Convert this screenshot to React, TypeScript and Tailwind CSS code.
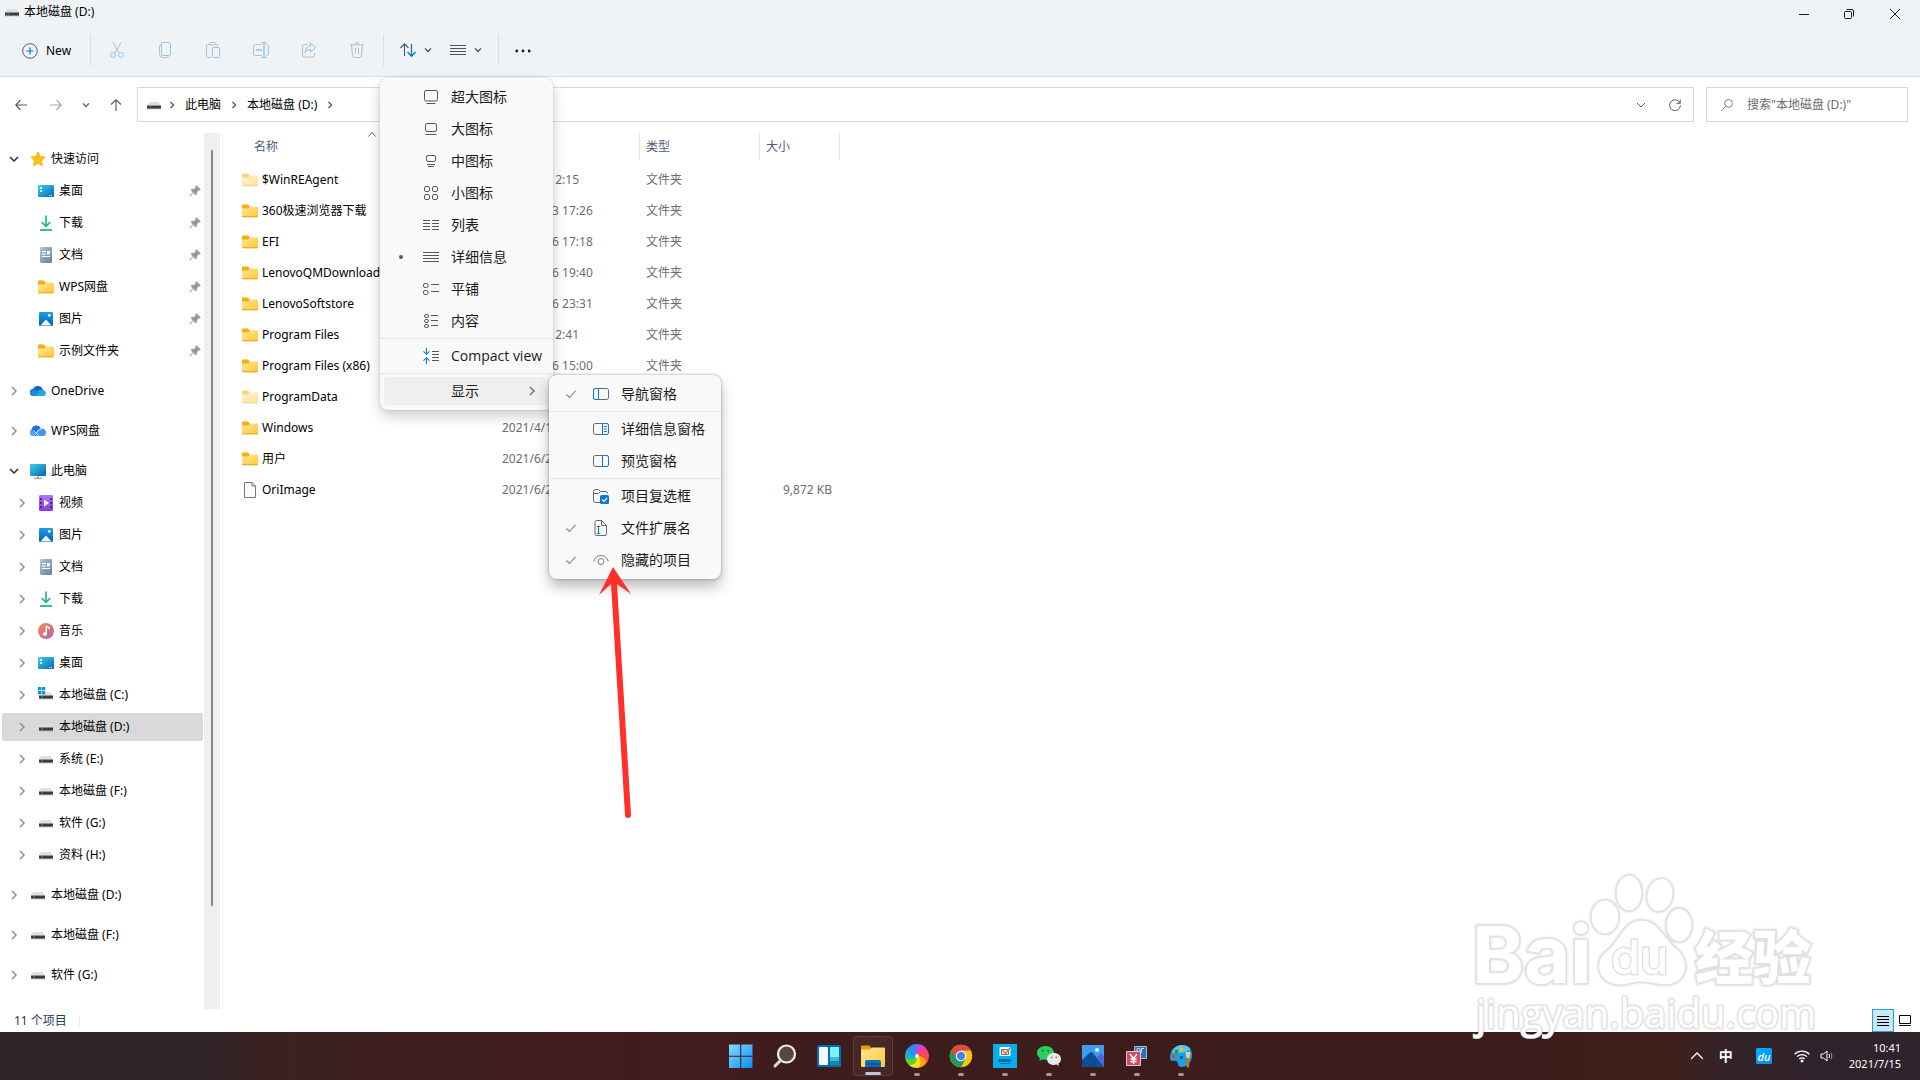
import type { ReactNode } from "react";
import clsx from "clsx";

type IconProps = { className?: string };

const Svg = ({
  size = 16,
  box = 16,
  className,
  children,
}: IconProps & { size?: number; box?: number; children: ReactNode }) => (
  <svg
    width={size}
    height={size}
    viewBox={`0 0 ${box} ${box}`}
    fill="none"
    aria-hidden="true"
    className={clsx("shrink-0", className)}
  >
    {children}
  </svg>
);

/* shared gradients for the coloured icons */
const Gradients = () => (
  <svg width="0" height="0" className="absolute" aria-hidden="true">
    <defs>
      <linearGradient id="folder" x1="0" y1="0" x2="1" y2="1">
        <stop offset="0" stopColor="#ffe69a" />
        <stop offset="1" stopColor="#ffc933" />
      </linearGradient>
      <linearGradient id="screen" x1="0" y1="0" x2="1" y2="1">
        <stop offset="0" stopColor="#37d4e4" />
        <stop offset="1" stopColor="#0b62b8" />
      </linearGradient>
      <linearGradient id="photo" x1="0" y1="0" x2="0" y2="1">
        <stop offset="0" stopColor="#1e9de3" />
        <stop offset="1" stopColor="#0862b2" />
      </linearGradient>
      <linearGradient id="doc" x1="0" y1="0" x2="1" y2="1">
        <stop offset="0" stopColor="#b3c5db" />
        <stop offset="1" stopColor="#64809f" />
      </linearGradient>
      <linearGradient id="video" x1="0" y1="0" x2="0" y2="1">
        <stop offset="0" stopColor="#b774f5" />
        <stop offset="1" stopColor="#843bdc" />
      </linearGradient>
      <linearGradient id="music" x1="0" y1="0" x2="1" y2="1">
        <stop offset="0" stopColor="#f39150" />
        <stop offset="1" stopColor="#b061ac" />
      </linearGradient>
      <linearGradient id="win" x1="0" y1="0" x2="1" y2="1">
        <stop offset="0" stopColor="#84dcff" />
        <stop offset="1" stopColor="#0a8cf5" />
      </linearGradient>
      <linearGradient id="du" x1="0" y1="0" x2="1" y2="1">
        <stop offset="0" stopColor="#00b4ff" />
        <stop offset="1" stopColor="#0a86f5" />
      </linearGradient>
    </defs>
  </svg>
);

const Chevron = ({ className }: IconProps) => (
  <Svg size={8} box={8} className={className}>
    <path d="M1 2.4 4 5.5 7 2.4" stroke="currentColor" strokeWidth="1.3" />
  </Svg>
);

const ChevronRight = ({ className }: IconProps) => (
  <Svg size={10} box={10} className={className}>
    <path d="M3 1 7 5 3 9" stroke="currentColor" strokeWidth="1.4" />
  </Svg>
);

const CrumbArrow = ({ className }: IconProps) => (
  <Svg size={10} box={10} className={className}>
    <path d="M3.5 2 6.5 5 3.5 8" stroke="currentColor" strokeWidth="1.4" />
  </Svg>
);

const DriveIcon = () => (
  <Svg>
    <path d="M3.4 5h9.2L15 8.5H1z" fill="#dcdee0" />
    <path d="M1 8.5h14v3.4H1z" fill="#3c3c3c" />
    <path d="M1 11.3h14v.9H1z" fill="#8b8d8e" />
    <path d="M3.6 9.4h1.3v1.2H3.6z" fill="#19e43a" />
  </Svg>
);

const SystemDriveIcon = () => (
  <Svg>
    <path d="M6 5.5h6.6L15 8.5H1z" fill="#dcdee0" />
    <path d="M1 8.5h14v3.4H1z" fill="#3c3c3c" />
    <path d="M1 11.3h14v.9H1z" fill="#8b8d8e" />
    <path d="M3.6 9.4h1.3v1.2H3.6z" fill="#19e43a" />
    <path
      d="M0 0h3.3v3.3H0zM3.9 0h3.3v3.3H3.9zM0 3.9h3.3v3.3H0zM3.9 3.9h3.3v3.3H3.9z"
      fill="#0f8fe0"
    />
  </Svg>
);

const FolderIcon = ({ className }: IconProps) => (
  <Svg className={className}>
    <path d="M0 2.6q0-1 1-1h5l2 2.2V7H0z" fill="#f5ae09" />
    <path d="M0 5.4h6.2L8 3.6h7q1 0 1 1v8.6q0 1-1 1H1q-1 0-1-1z" fill="url(#folder)" />
    <path d="M0 13.2h16q0 1-1 1H1q-1 0-1-1z" fill="#e2a71b" />
  </Svg>
);

const FileIcon = () => (
  <Svg>
    <path d="M2.5.5h7.6l3.4 3.4v11.6h-11z" fill="#fafafa" stroke="#777" />
    <path d="M10 .5V4h3.5" stroke="#777" />
  </Svg>
);

const StarIcon = () => (
  <Svg>
    <path
      d="m8 1 2.2 4.5 4.9.7-3.6 3.5.9 4.9L8 12.3l-4.4 2.3.9-4.9L.9 6.2l4.9-.7z"
      fill="#fdc116"
      stroke="#f5b50e"
    />
  </Svg>
);

const DesktopIcon = () => (
  <Svg>
    <rect y="2" width="16" height="12" rx="1" fill="url(#screen)" />
    <path d="M2 4h2v2H2zM2 7h2v2H2z" fill="#d8fbff" />
    <path d="M11 12.5h1.2M12.8 12.5H14" stroke="#c7ecff" />
  </Svg>
);

const DownloadIcon = () => (
  <Svg>
    <path d="M8 .5v10.5M3.6 7 8 11.4 12.4 7" stroke="#23b78a" strokeWidth="1.7" />
    <path d="M2 15h12" stroke="#1aab97" strokeWidth="1.7" />
  </Svg>
);

const DocumentIcon = () => (
  <Svg>
    <rect x="2" width="12" height="16" rx="1.2" fill="url(#doc)" />
    <path d="M4 4.5h4M4 7h4M4 9.5h8" stroke="#fff" />
    <path d="M9 4h3v3.5H9z" fill="#fff" />
  </Svg>
);

const PictureIcon = () => (
  <Svg>
    <rect x="1" y="1" width="14" height="14" rx="1.2" fill="url(#photo)" />
    <path d="m2.4 14.6 5.6-6 5.6 6z" fill="#eef8ff" />
    <circle cx="11.3" cy="4.4" r="1.4" fill="#e6f6ff" />
  </Svg>
);

const VideoIcon = () => (
  <Svg>
    <rect x="1" width="14" height="16" rx="1.2" fill="url(#video)" />
    <path
      d="M2 3h1.8v2H2zM2 7h1.8v2H2zM2 11h1.8v2H2zM12.2 3H14v2h-1.8zM12.2 7H14v2h-1.8zM12.2 11H14v2h-1.8z"
      fill="#4c1c8a"
    />
    <path d="m6 4.4 5.2 3.6L6 11.6z" fill="#fff" />
  </Svg>
);

const MusicIcon = () => (
  <Svg>
    <circle cx="8" cy="8" r="8" fill="url(#music)" />
    <ellipse cx="6.8" cy="11" rx="2.1" ry="1.8" fill="#fff" />
    <path d="M8.3 11V3.4l2.8 1v1.9" stroke="#fff" strokeWidth="1.4" />
  </Svg>
);

const PcIcon = () => (
  <Svg>
    <rect y="1" width="16" height="12" rx=".8" fill="url(#screen)" />
    <path d="M7 13h2v2H7z" fill="#b6bec5" />
    <path d="M4 15.3h8" stroke="#8d99a3" strokeWidth="1.2" />
  </Svg>
);

const OneDriveIcon = () => (
  <Svg>
    <path d="M3.5 13A3.5 3.5 0 0 1 3 6a5.3 5.3 0 0 1 10 1.2A3 3 0 0 1 13 13z" fill="#0f6cc5" />
    <path d="M5 13 2 11.8 9.5 7l3.5.2A2.9 2.9 0 0 1 13 13z" fill="#28a8ea" />
    <path d="M3.5 13A3.4 3.4 0 0 1 .2 8.6L3 6.4l6.6 3L5 13z" fill="#168fdd" />
  </Svg>
);

const WpsCloudIcon = () => (
  <Svg>
    <path d="M3.5 13A3.5 3.5 0 0 1 1.6 6.5 5 5 0 0 1 10.5 4.5L9 13z" fill="#1f6ff0" />
    <path d="M8 13 6 9.5Q7.5 6 11.5 5.5A4 4 0 0 1 16 9.4 3.6 3.6 0 0 1 12.5 13z" fill="#3f93fa" />
    <path d="M3.5 13A3.5 3.5 0 0 1 1.5 6.7L8 13z" fill="#5aa6fb" />
    <path d="m3.4 7.4 5.4 5.4M6.8 9.8Q8 6.2 11.5 5.8" stroke="#fff" strokeWidth=".9" />
  </Svg>
);

const PinIcon = () => (
  <Svg size={12} box={12}>
    <path
      d="M7.4.6 11.4 4.6 10.2 5.2 9.7 5.1 7.8 7 7.7 9.2 6.8 10 4.3 7.6 1 11.2.7 10.9 4.2 7.5 1.9 5.2 2.8 4.3 5 4.2 6.9 2.3 6.8 1.7z"
      fill="#919ca5"
      stroke="#919ca5"
      strokeWidth=".7"
    />
  </Svg>
);

type TreeNode = {
  label: string;
  icon: ReactNode;
  level?: 0 | 1;
  open?: boolean;
  pinned?: boolean;
  selected?: boolean;
};

const tree: TreeNode[] = [
  { label: "快速访问", icon: <StarIcon />, open: true },
  { label: "桌面", icon: <DesktopIcon />, level: 1, pinned: true },
  { label: "下载", icon: <DownloadIcon />, level: 1, pinned: true },
  { label: "文档", icon: <DocumentIcon />, level: 1, pinned: true },
  { label: "WPS网盘", icon: <FolderIcon />, level: 1, pinned: true },
  { label: "图片", icon: <PictureIcon />, level: 1, pinned: true },
  { label: "示例文件夹", icon: <FolderIcon />, level: 1, pinned: true },
  { label: "OneDrive", icon: <OneDriveIcon /> },
  { label: "WPS网盘", icon: <WpsCloudIcon /> },
  { label: "此电脑", icon: <PcIcon />, open: true },
  { label: "视频", icon: <VideoIcon />, level: 1 },
  { label: "图片", icon: <PictureIcon />, level: 1 },
  { label: "文档", icon: <DocumentIcon />, level: 1 },
  { label: "下载", icon: <DownloadIcon />, level: 1 },
  { label: "音乐", icon: <MusicIcon />, level: 1 },
  { label: "桌面", icon: <DesktopIcon />, level: 1 },
  { label: "本地磁盘 (C:)", icon: <SystemDriveIcon />, level: 1 },
  { label: "本地磁盘 (D:)", icon: <DriveIcon />, level: 1, selected: true },
  { label: "系统 (E:)", icon: <DriveIcon />, level: 1 },
  { label: "本地磁盘 (F:)", icon: <DriveIcon />, level: 1 },
  { label: "软件 (G:)", icon: <DriveIcon />, level: 1 },
  { label: "资料 (H:)", icon: <DriveIcon />, level: 1 },
  { label: "本地磁盘 (D:)", icon: <DriveIcon /> },
  { label: "本地磁盘 (F:)", icon: <DriveIcon /> },
  { label: "软件 (G:)", icon: <DriveIcon /> },
];

const files = [
  { name: "$WinREAgent", date: "2021/7/5 2:15", hidden: true },
  { name: "360极速浏览器下载", date: "2021/6/23 17:26" },
  { name: "EFI", date: "2021/6/26 17:18" },
  { name: "LenovoQMDownload", date: "2021/6/26 19:40" },
  { name: "LenovoSoftstore", date: "2021/6/26 23:31" },
  { name: "Program Files", date: "2021/7/5 2:41" },
  { name: "Program Files (x86)", date: "2021/6/26 15:00" },
  { name: "ProgramData", hidden: true },
  { name: "Windows", date: "2021/4/1" },
  { name: "用户", date: "2021/6/2" },
  { name: "OriImage", date: "2021/6/2", size: "9,872 KB" },
];

const Sep = ({ className }: IconProps) => (
  <div className={clsx("h-8 w-px bg-[#dcdfe2]", className)} />
);

const ToolButton = ({ label, children }: { label: string; children: ReactNode }) => (
  <button aria-label={label} className="flex h-9 w-12 items-center justify-center">
    {children}
  </button>
);

const TitleBar = () => (
  <div className="flex h-6 items-center">
    <div className="flex items-center gap-1 pl-1">
      <DriveIcon />
      <h1 className="text-xs">本地磁盘 (D:)</h1>
    </div>
    <div className="ml-auto flex h-7 self-start pr-px text-[#1b1b1b]">
      <button aria-label="最小化" className="flex w-[45px] items-center justify-center">
        <Svg size={10} box={10}>
          <path d="M0 5.5h10" stroke="currentColor" />
        </Svg>
      </button>
      <button aria-label="还原" className="flex w-[45px] items-center justify-center">
        <Svg size={10} box={10}>
          <rect x=".5" y="2.5" width="7" height="7" rx="1" stroke="currentColor" />
          <path d="M2.5.5H8q1.5 0 1.5 1.5v5.5" stroke="currentColor" />
        </Svg>
      </button>
      <button aria-label="关闭" className="flex w-12 items-center justify-center">
        <Svg size={10} box={10}>
          <path d="m0 0 10 10M10 0 0 10" stroke="currentColor" />
        </Svg>
      </button>
    </div>
  </div>
);

const Toolbar = () => (
  <div className="flex h-[52px] items-center">
    <button className="ml-[22px] flex w-[68px] items-center gap-2 pt-px text-left text-xs">
      <Svg>
        <circle cx="8" cy="8" r="7.3" stroke="#5a5f63" />
        <path d="M8 4.5v7M4.5 8h7" stroke="#0a74cf" strokeWidth="1.2" />
      </Svg>
      New
    </button>
    <Sep className="mr-0.5" />
    <ToolButton label="剪切">
      <Svg>
        <path d="M4 .5 10 11M12 .5 6 11" stroke="#b9bdc0" />
        <circle cx="4" cy="13" r="2.4" stroke="#8fc4ec" />
        <circle cx="12" cy="13" r="2.4" stroke="#8fc4ec" />
      </Svg>
    </ToolButton>
    <ToolButton label="复制">
      <Svg>
        <path d="M4.5 2.5Q2.5 2.8 2.5 5v7q0 3.5 3.5 3.5h3.5q1.5 0 2-1.5" stroke="#b9bdc0" />
        <rect x="4.5" y=".5" width="9" height="13" rx="1.8" stroke="#8fc4ec" />
      </Svg>
    </ToolButton>
    <ToolButton label="粘贴">
      <Svg>
        <path
          d="M5 2.5H2.8q-1.3 0-1.3 1.3v10.4q0 1.3 1.3 1.3H6M10 2.5h1.2q1.3 0 1.3 1.3V5"
          stroke="#b9bdc0"
        />
        <rect x="4.5" y=".5" width="6" height="2.5" rx="1.2" stroke="#b9bdc0" />
        <rect x="7.5" y="5.5" width="7" height="10" rx="1.2" stroke="#8fc4ec" />
      </Svg>
    </ToolButton>
    <ToolButton label="重命名">
      <Svg>
        <path d="M9 2.5H2.5q-2 0-2 2v7q0 2 2 2H9M13 2.5h.5q2 0 2 2v7q0 2-2 2H13" stroke="#b9bdc0" />
        <path d="M11 0v16M8.5.5h5M8.5 15.5h5M3 8h6" stroke="#8fc4ec" strokeWidth="1.4" />
      </Svg>
    </ToolButton>
    <ToolButton label="共享">
      <Svg>
        <path d="M6.5 2.5h-3q-2 0-2 2V13q0 2 2 2h8q2 0 2-2v-2" stroke="#b9bdc0" />
        <path
          d="M9.5 1.3 14.7 5.6 9.5 10V7.3Q6 7.3 4.2 10.3 4.6 4.5 9.5 4z"
          stroke="#8fc4ec"
          strokeLinejoin="round"
        />
      </Svg>
    </ToolButton>
    <ToolButton label="删除">
      <Svg>
        <path
          d="M1 2.8h14M6 2.5Q6 .6 8 .6t2 1.9M2.5 3l1.2 11q.2 1.5 1.6 1.5h5.4q1.4 0 1.6-1.5L13.500 3M6.500 6v6M9.500 6v6"
          stroke="#b9bdc0"
        />
      </Svg>
    </ToolButton>
    <Sep className="ml-0.5" />
    <div className="ml-2 flex gap-0.5 text-[#4a4d50]">
      <ToolButton label="排序">
        <Svg className="mr-2">
          <path d="M4.5 14V2M.5 6l4-4.2L8.5 6" stroke="#4f5458" strokeWidth="1.1" />
          <path d="M11.5 2v12M7.5 10l4 4.2 4-4.2" stroke="#0a74cf" strokeWidth="1.3" />
        </Svg>
        <Chevron />
      </ToolButton>
      <ToolButton label="查看">
        <Svg className="mr-2">
          <path d="M0 3.5h16M0 6.5h16M0 9.5h16M0 12.5h16" stroke="#4f5458" />
        </Svg>
        <Chevron />
      </ToolButton>
    </div>
    <Sep className="ml-2" />
    <ToolButton label="查看更多">
      <Svg>
        <g fill="#1b1b1b">
          <circle cx="1.8" cy="9" r="1.4" />
          <circle cx="8" cy="9" r="1.4" />
          <circle cx="14.2" cy="9" r="1.4" />
        </g>
      </Svg>
    </ToolButton>
  </div>
);

const AddressBar = () => (
  <div className="flex h-14 items-center pr-3 pb-px">
    <div className="flex w-[137px] items-center text-[#5c5c5c]">
      <button aria-label="后退" className="ml-[15px]">
        <Svg size={12} box={12}>
          <path d="M12 6H.8M5.5 1 .8 6l4.700 5" stroke="currentColor" strokeWidth="1.2" />
        </Svg>
      </button>
      <button aria-label="前进" className="ml-[23px] text-[#a8a8a8]">
        <Svg size={12} box={12}>
          <path d="M0 6h11.2M6.5 1l4.700 5-4.700 5" stroke="currentColor" strokeWidth="1.2" />
        </Svg>
      </button>
      <button aria-label="最近浏览的位置" className="ml-5">
        <Chevron />
      </button>
      <button aria-label="向上" className="ml-5">
        <Svg size={12} box={12}>
          <path d="M6 12V.8M1 5.5 6 .8l5 4.700" stroke="currentColor" strokeWidth="1.2" />
        </Svg>
      </button>
    </div>
    <div className="flex h-[35px] flex-1 items-center border border-[#d9d9d9] pr-3 pl-2 text-xs text-[#5c5c5c]">
      <DriveIcon />
      <CrumbArrow className="ml-[5px]" />
      <button className="ml-2 text-black">此电脑</button>
      <CrumbArrow className="mx-2" />
      <button className="text-black">本地磁盘 (D:)</button>
      <CrumbArrow className="ml-2" />
      <button aria-label="以前的位置" className="ml-auto">
        <Svg size={10} box={10}>
          <path d="m1 3 4 4 4-4" stroke="currentColor" />
        </Svg>
      </button>
      <button aria-label="刷新" className="ml-[23px]">
        <Svg size={12} box={12}>
          <path d="M11 4.2A5.4 5.4 0 1 0 11.4 6.5M11.2.4v3.9H7.4" stroke="currentColor" />
        </Svg>
      </button>
    </div>
    <label className="ml-3 flex h-[35px] w-[202px] items-center border border-[#d9d9d9] pl-[14px]">
      <Svg size={12} box={12}>
        <circle cx="7.6" cy="4.4" r="3.9" stroke="#808080" />
        <path d="M4.8 7.2.4 11.6" stroke="#808080" />
      </Svg>
      <input
        aria-label="搜索"
        placeholder={'搜索"本地磁盘 (D:)"'}
        className="ml-[14px] w-full min-w-0 bg-transparent text-xs outline-none placeholder:text-[#6d6d6d]"
      />
    </label>
  </div>
);

const Sidebar = () => (
  <nav className="flex shrink-0 border-r border-[#f3f3f3]">
    <ul className="w-[204px] pt-[10px]">
      {tree.map((node, i) => (
        <li
          key={i}
          className={clsx("flex h-8 items-center pl-0.5", i > 0 && !node.level && "mt-2")}
        >
          <button
            className={clsx(
              "flex h-7 w-[201px] items-center rounded-xs text-xs",
              node.level ? "pl-[15px]" : "pl-[7px]",
              node.selected && "bg-[#d9d9d9]",
            )}
          >
            {node.open ? (
              <Svg size={10} box={10} className="mr-[11px]">
                <path d="m1 3 4 4 4-4" stroke="#2b2b2b" strokeWidth="1.5" />
              </Svg>
            ) : (
              <ChevronRight
                className={clsx("mr-[11px] text-[#8a8a8a]", node.pinned && "invisible")}
              />
            )}
            {node.icon}
            <span className="ml-[5px]">{node.label}</span>
            {node.pinned && (
              <span className="mr-0.5 ml-auto">
                <PinIcon />
              </span>
            )}
          </button>
        </li>
      ))}
    </ul>
    <div className="mr-0.5 flex w-4 justify-center bg-[#efefef] pt-[17px]">
      <div className="h-[756px] w-0.5 rounded-full bg-[#868686]" />
    </div>
  </nav>
);

const FileList = () => (
  <main className="relative flex-1 pl-[19px]">
    <Svg size={8} box={8} className="absolute top-[-2px] left-[145px]">
      <path d="m.5 5.5 3.5-4 3.5 4" stroke="#6b6b6b" />
    </Svg>
    <table className="w-[598px] table-fixed text-left text-xs">
      <thead className="text-[#4c607a]">
        <tr className="h-[31px] align-top">
          <th className="w-[253px] p-0 font-normal">
            <div className="flex h-[27px] items-center pl-3">名称</div>
          </th>
          <th className="w-[144px] p-0" />
          <th className="w-[120px] p-0 font-normal">
            <div className="flex h-[27px] items-center border-l border-[#e2e2e2] pl-1.5">类型</div>
          </th>
          <th className="w-[81px] p-0 font-normal">
            <div className="flex h-[27px] items-center border-x border-[#e2e2e2] pl-1.5">大小</div>
          </th>
        </tr>
      </thead>
      <tbody className="text-[#6d6d6d]">
        {files.map((file) => (
          <tr key={file.name} className="h-[31px] whitespace-nowrap">
            <td className="text-black">
              <div className="flex items-center gap-1">
                {file.size ? (
                  <FileIcon />
                ) : (
                  <FolderIcon className={file.hidden ? "opacity-50" : undefined} />
                )}
                {file.name}
              </div>
            </td>
            <td className="pl-[7px]">{file.date}</td>
            <td className="pl-[7px]">{file.size ? "" : "文件夹"}</td>
            <td className="pr-2 text-right">{file.size}</td>
          </tr>
        ))}
      </tbody>
    </table>
  </main>
);

const StatusBar = () => (
  <footer className="flex h-[23px] items-center pl-[14px] text-xs text-[#1e395b]">
    <span>11 个项目</span>
    <div className="ml-3 h-3 w-px bg-[#ececec]" />
    <div className="ml-auto flex h-full items-center pr-2 text-black">
      <button
        aria-label="详细信息"
        className="flex h-full w-[22px] items-center justify-center border border-[#26a0da] bg-[#cbe8f6]"
      >
        <Svg size={12} box={12}>
          <path d="M0 1.5h12M0 4.5h12M0 7.5h12M0 10.5h12" stroke="currentColor" />
        </Svg>
      </button>
      <button aria-label="大图标" className="ml-[5px]">
        <Svg size={13} box={13}>
          <path d="M.5 1.5h11v8H.5zM0 11.5h12" stroke="currentColor" />
        </Svg>
      </button>
    </div>
  </footer>
);

const MenuItem = ({
  icon,
  label,
  mark,
  submenu,
}: {
  icon?: ReactNode;
  label: string;
  mark?: "dot" | "check";
  submenu?: boolean;
}) => (
  <button
    role="menuitem"
    className={clsx(
      "mx-1 my-0.5 flex h-7 items-center rounded text-left text-sm whitespace-nowrap",
      submenu && "bg-[#efefef]",
    )}
  >
    <span className="flex w-[39px] justify-center">
      {mark === "dot" && <i className="mr-1.5 size-1 rounded-full bg-[#5c5c5c]" />}
      {mark === "check" && (
        <Svg size={10} box={10} className="mr-1.5">
          <path d="M.5 5.5 3.5 8.5 9.5 1.8" stroke="#868686" strokeWidth="1.1" />
        </Svg>
      )}
    </span>
    <span className="mr-3 size-4">{icon}</span>
    {label}
    {submenu && <ChevronRight className="mr-3 ml-auto text-[#6b6b6b]" />}
  </button>
);

const MenuLine = () => <hr className="my-px border-[#e6e6e6]" />;

const Thumb = ({ d }: { d: string }) => (
  <Svg>
    <path d={d} stroke="#55585b" />
  </Svg>
);

const ViewMenu = () => (
  <div
    role="menu"
    className="absolute top-[78px] left-[380px] flex w-[173px] flex-col rounded-lg bg-[#f9f9f9] py-[3px] font-['Open_Sans','Noto_Sans_CJK_SC',sans-serif] text-[#1b1b1b] shadow-[0_6px_14px_rgba(0,0,0,0.2),0_0_2px_rgba(0,0,0,0.2)]"
  >
    <MenuItem
      label="超大图标"
      icon={
        <Thumb d="M3 1.5h10q1.5 0 1.5 1.5v7.5q0 1.5-1.5 1.5H3q-1.5 0-1.5-1.5V3q0-1.5 1.5-1.5zM3.5 14.5h9" />
      }
    />
    <MenuItem
      label="大图标"
      icon={
        <Thumb d="M4 2.5h8q1.5 0 1.5 1.5v5q0 1.5-1.5 1.5H4q-1.5 0-1.5-1.5V4q0-1.5 1.5-1.5zM2.5 13.5h11" />
      }
    />
    <MenuItem
      label="中图标"
      icon={
        <Thumb d="M5 2.5h6q1.5 0 1.5 1.5v3q0 1.5-1.5 1.5H5q-1.5 0-1.5-1.5V4q0-1.5 1.5-1.5zM4 11.5h8M5 13.5h6" />
      }
    />
    <MenuItem
      label="小图标"
      icon={
        <Svg>
          {[1.5, 9.5].map((x) =>
            [1.5, 9.5].map((y) => (
              <rect key={`${x}-${y}`} x={x} y={y} width="5" height="5" rx="1.5" stroke="#55585b" />
            )),
          )}
        </Svg>
      }
    />
    <MenuItem
      label="列表"
      icon={<Thumb d="M0 3.5h7M0 6.5h7M0 9.5h7M0 12.5h7M9 3.5h7M9 6.5h7M9 9.5h7M9 12.5h7" />}
    />
    <MenuItem
      label="详细信息"
      mark="dot"
      icon={<Thumb d="M0 3.5h16M0 6.5h16M0 9.5h16M0 12.5h16" />}
    />
    <MenuItem
      label="平铺"
      icon={
        <Svg>
          <g stroke="#55585b">
            <rect x=".5" y="2.5" width="4.5" height="4" rx="1.5" />
            <rect x=".5" y="9.5" width="4.5" height="4" rx="1.5" />
            <path d="M8 3.5h8M8 10.5h8" />
          </g>
        </Svg>
      }
    />
    <MenuItem
      label="内容"
      icon={
        <Svg>
          <g stroke="#55585b">
            <rect x="1.5" y="1.5" width="4" height="3" rx="1.5" />
            <rect x="1.5" y="6.5" width="4" height="3" rx="1.5" />
            <rect x="1.5" y="11.5" width="4" height="3" rx="1.5" />
            <path d="M8 2.5h7M8 7.5h7M8 12.5h7" />
          </g>
        </Svg>
      }
    />
    <MenuLine />
    <MenuItem
      label="Compact view"
      icon={
        <Svg>
          <path
            d="M3.5 0v6M.5 3.3l3 3 3-3M3.5 16v-6M.5 12.7l3-3 3 3"
            stroke="#0a78d4"
            strokeWidth="1.1"
          />
          <path d="M9 3.5h7M9 6.5h7M9 9.5h7M9 12.5h7" stroke="#55585b" />
        </Svg>
      }
    />
    <MenuLine />
    <MenuItem label="显示" submenu />
  </div>
);

const PaneFrame = ({ side, lines }: { side: "left" | "right"; lines?: boolean }) => (
  <Svg>
    <rect x=".5" y="2.5" width="15" height="11" rx="1.8" stroke="#66696c" />
    {side === "left" ? (
      <path
        d="M5.5 2.5H2.3Q.5 2.5.5 4.3v7.4q0 1.8 1.8 1.8h3.2z"
        fill="#f9fcff"
        stroke="#0a78d4"
      />
    ) : (
      <path
        d="M9.5 2.5h4.2q1.8 0 1.8 1.8v7.4q0 1.8-1.8 1.8H9.5z"
        fill="#f9fcff"
        stroke="#0a78d4"
      />
    )}
    {lines && <path d="M11 5.500h3M11 8h3M11 10.500h3" stroke="#0a78d4" />}
  </Svg>
);

const ShowMenu = () => (
  <div
    role="menu"
    className="absolute top-[375px] left-[549px] flex w-[172px] flex-col rounded-lg bg-[#f9f9f9] py-[3px] pl-px text-[#1b1b1b] shadow-[0_8px_14px_rgba(0,0,0,0.26),0_0_3px_rgba(0,0,0,0.35)]"
  >
    <MenuItem label="导航窗格" mark="check" icon={<PaneFrame side="left" />} />
    <MenuLine />
    <MenuItem label="详细信息窗格" icon={<PaneFrame side="right" lines />} />
    <MenuItem label="预览窗格" icon={<PaneFrame side="right" />} />
    <MenuLine />
    <MenuItem
      label="项目复选框"
      icon={
        <Svg>
          <path
            d="M7 14.5H2.5q-2 0-2-2v-9q0-2 2-2h3l2 2H13q1.5 0 1.5 2M.5 5.5h5l2-2"
            stroke="#66696c"
          />
          <rect x="7" y="7" width="9" height="9" rx="1.5" fill="#0a78d4" />
          <path d="m9 11.5 2 2 3.2-3.6" stroke="#fff" strokeWidth="1.2" />
        </Svg>
      }
    />
    <MenuItem
      label="文件扩展名"
      mark="check"
      icon={
        <Svg>
          <path
            d="M8.5.5h-5Q2 .5 2 2v12q0 1.5 1.5 1.5H12q1.5 0 1.5-1.5V5.5zM8.5.5v5h5"
            stroke="#66696c"
          />
          <path d="M5.5 6.5v7M3.8 6.5h3.4M3.8 13.5h3.4" stroke="#0a78d4" />
        </Svg>
      }
    />
    <MenuItem
      label="隐藏的项目"
      mark="check"
      icon={
        <Svg>
          <path d="M.7 9.5Q2.5 3.5 8 3.5t7.3 6" stroke="#77797b" />
          <circle cx="8" cy="9.5" r="3" stroke="#77797b" />
        </Svg>
      }
    />
  </div>
);

const PointerArrow = () => (
  <svg
    width="40"
    height="256"
    viewBox="0 0 40 256"
    aria-hidden="true"
    className="pointer-events-none absolute top-[565px] left-[597px]"
  >
    <path d="M16 2 34 29 20 19 34 250q0 3-3 3t-3-3L14 19 2 30z" fill="#ff3029" />
  </svg>
);

const Watermark = () => (
  <svg
    width="360"
    height="180"
    viewBox="0 0 360 180"
    aria-hidden="true"
    className="pointer-events-none absolute right-[90px] bottom-[30px] [filter:drop-shadow(0_0_1px_rgba(0,0,0,0.2))]"
  >
    <g fill="#fff" stroke="#e2e2e2" strokeWidth="1.5">
      <ellipse cx="135" cy="47" rx="14" ry="17" />
      <ellipse cx="159" cy="23" rx="13" ry="18" />
      <ellipse cx="190" cy="25" rx="13" ry="17" transform="rotate(12 190 25)" />
      <ellipse cx="209" cy="55" rx="13" ry="17" />
      <path d="M171 50c-18 0-20 20-36 32-12 10-8 33 16 33 8 0 12-3 20-3s16 3 24 3c22 0 27-24 12-36-14-12-18-29-36-29z" />
      <g className="[paint-order:stroke]" strokeWidth="3" fontWeight="700">
        <text x="2" y="113" fontSize="79" fontFamily="Inter, sans-serif">
          Bai
        </text>
        <text x="141" y="104" fontSize="47" fontWeight="500" fontFamily="Inter, sans-serif">
          du
        </text>
        <text x="225" y="109" fontSize="58" fontWeight="900" fontFamily="'Noto Sans CJK SC', sans-serif">
          经验
        </text>
      </g>
      <text
        x="6"
        y="158"
        fontSize="40"
        strokeWidth="2"
        className="[paint-order:stroke]"
        fontFamily="'Open Sans', sans-serif"
      >
        jingyan.baidu.com
      </text>
    </g>
  </svg>
);

const petals = [
  "#b44cf0",
  "#f23d9c",
  "#ff4b3a",
  "#ff9d1c",
  "#f7e21b",
  "#5fd52a",
  "#19b5c8",
  "#2a8cf5",
];

const taskbarApps: { name: string; running?: boolean; active?: boolean; icon: ReactNode }[] = [
  {
    name: "开始",
    icon: (
      <path
        d="M0 .5h11.2v11.2H0zM12.3.5h11.2v11.2H12.3zM0 12.8h11.2V24H0zM12.3 12.8h11.2V24H12.3z"
        fill="url(#win)"
      />
    ),
  },
  {
    name: "搜索",
    icon: (
      <>
        <circle cx="13.5" cy="10" r="8.5" fill="#5a4444" stroke="#f0f0f0" strokeWidth="2.2" />
        <path d="M7.5 16.5 2 22" stroke="#dcdcdc" strokeWidth="3" strokeLinecap="round" />
      </>
    ),
  },
  {
    name: "小组件",
    icon: (
      <>
        <rect y="1" width="24" height="22" rx="1.5" fill="#0767b9" />
        <rect x="2" y="3" width="9" height="18" rx="1" fill="#f3f6fa" />
        <path d="M13 3h9v10h-9z" fill="#7af5ff" />
        <path d="M13 13h9v4h-9z" fill="#39bfd0" />
        <path d="M13 17h9v4h-9z" fill="#168a9c" />
      </>
    ),
  },
  {
    name: "文件资源管理器",
    running: true,
    active: true,
    icon: (
      <>
        <path d="M0 2.5q0-1 1-1h7.5l2 2.5v4H0z" fill="#e09b05" />
        <path d="M0 5.5h9l2-2h12q1 0 1 1V22q0 1-1 1H1q-1 0-1-1z" fill="url(#folder)" />
        <path d="M4 18q0-2 2-2h12q2 0 2 2v5H4z" fill="#0f6cbd" />
        <path d="M6 19h12v2H6z" fill="#0b559a" />
      </>
    ),
  },
  {
    name: "360极速浏览器",
    running: true,
    icon: (
      <>
        <circle cx="12" cy="12" r="10" fill="#2a8cf5" />
        {petals.map((color, i) => (
          <path
            key={color}
            d="M12 12Q6 7 10 .8q7-2 11.5 4Q15 3 12 12z"
            fill={color}
            transform={`rotate(${i * 45} 12 12)`}
          />
        ))}
        <circle cx="12" cy="12" r="2" fill="#fff" />
      </>
    ),
  },
  {
    name: "Google Chrome",
    running: true,
    icon: (
      <>
        <circle cx="12" cy="12" r="11.2" fill="#fbc116" />
        <path d="M12 12 2.3 6.4A11.2 11.2 0 0 0 12 23.2l4.8-8.4z" fill="#1d9d58" />
        <path d="M2.3 6.4A11.2 11.2 0 0 1 21.7 6.4H12L7 14.5z" fill="#dd4b3e" />
        <circle cx="12" cy="12" r="5.3" fill="#fff" />
        <circle cx="12" cy="12" r="4.2" fill="#4285f4" />
      </>
    ),
  },
  {
    name: "百度",
    running: true,
    icon: (
      <>
        <path d="M0 0h24v24H0z" fill="#04aef0" />
        <rect x="6.5" y="3" width="11" height="9" rx="1" fill="#fff" />
        <path d="M8.5 5.5h7v5h-7z" stroke="#3f7fb8" />
        <path d="m9.5 6 3 3.5L17 4" stroke="#e8703b" strokeWidth="1.6" />
        <text
          x="12"
          y="18"
          textAnchor="middle"
          fontSize="4"
          fontWeight="700"
          fill="#0a3550"
          fontFamily="Inter, sans-serif"
        >
          BAIDU
        </text>
        <path d="M7 19.5h10" stroke="#0a5f88" strokeWidth=".8" />
      </>
    ),
  },
  {
    name: "微信",
    running: true,
    icon: (
      <>
        <path
          d="M8.5 2C3.5 2 0 5 0 9c0 2.3 1.2 4 3 5.3L2.3 17l3-1.6C11 17 17 14.100 17 9c0-4-3.500-7-8.500-7z"
          fill="#27cf5f"
        />
        <circle cx="5.7" cy="6.8" r="1" fill="#0d6e32" />
        <circle cx="11.3" cy="6.8" r="1" fill="#0d6e32" />
        <path
          d="M17 9c-4 0-7 2.6-7 6s3 6 7 6c.9 0 1.7-.1 2.4-.4L22 22l-.7-2.300C22.900 18.600 24 17 24 15c0-3.400-3-6-7-6z"
          fill="#e8e8e8"
        />
        <circle cx="14.7" cy="13.3" r=".9" fill="#777" />
        <circle cx="19.3" cy="13.3" r=".9" fill="#777" />
      </>
    ),
  },
  {
    name: "照片",
    running: true,
    icon: (
      <>
        <rect x="1" y="1" width="22" height="22" rx="1" fill="#3f9bf0" />
        <path d="m12 16 8-6.5 3 3V22q0 1-1 1H12z" fill="#4a68d4" />
        <path d="M1 16 9 8.5q1.5-1 3 .5L22.5 23H2q-1 0-1-1z" fill="#0d4f92" />
        <circle cx="16" cy="6" r="2" fill="#e4f6ff" />
      </>
    ),
  },
  {
    name: "截图工具",
    running: true,
    icon: (
      <>
        <path d="M9.5 2.5h12v12h-12z" fill="#2474b8" stroke="#a9bfce" />
        <circle cx="13.5" cy="6" r="1.7" stroke="#d5eeff" />
        <path d="M16.5 8.5v-4H19" stroke="#d5eeff" />
        <path d="M1.5 7.5h14v14h-14z" fill="#d04a66" stroke="#f0c5cf" />
        <path
          d="m5 10 3.5 4.5L12 10M8.500 14.500V20M5.500 15h6M5.500 17.500h6"
          stroke="#fff"
          strokeWidth="1.4"
        />
      </>
    ),
  },
  {
    name: "画图",
    running: true,
    icon: (
      <>
        <path
          d="M13 1C6 1 1 7 1 13.5 1 16 2 17 3.5 17c2 0 3-1 4.5.5S8 23 12.5 23C19 23 23 17 23 11c0-6-4-10-10-10z"
          fill="#1f9fe0"
        />
        <path d="M13 1C8 1 4.5 4 2.5 8 8 10 17 9 21.5 5 19.5 2.5 16.5 1 13 1z" fill="#54c6f2" />
        <circle cx="12.5" cy="5" r="1.9" fill="#fdc116" />
        <circle cx="7.5" cy="7.5" r="1.9" fill="#3f8f2b" />
        <circle cx="4.5" cy="12.5" r="1.9" fill="#d9532c" />
        <circle cx="12.5" cy="13.5" r="1.5" fill="#0d4e79" />
        <path d="M17.3 13h3.2l-.4 10q-1.2 1.5-2.4 0z" fill="#c27a1d" />
        <path d="M16.5 8h5l-1 6h-3z" fill="#eccda0" />
      </>
    ),
  },
];

const Taskbar = () => (
  <div className="grid h-12 grid-cols-[1fr_auto_1fr] items-center bg-[linear-gradient(to_right,#30232a_0%,#31242a_11%,#3b2220_14%,#431c1d_30%,#3c1d1c_50%,#3c1d1b_80%,#40201b_87%,#33232a_90%,#2f232c_100%)] pl-0.5 text-white">
    <div />
    <div className="flex gap-1">
      {taskbarApps.map((app) => (
        <button
          key={app.name}
          aria-label={app.name}
          className={clsx(
            "relative flex size-10 items-center justify-center rounded",
            app.active && "border border-white/10 bg-white/5",
          )}
        >
          <Svg size={24} box={24}>
            {app.icon}
          </Svg>
          {app.running && (
            <i
              className={clsx(
                "absolute bottom-0 h-[3px] rounded-full",
                app.active ? "w-4 bg-[#b5cdd3]" : "w-1.5 bg-[#a89797]",
              )}
            />
          )}
        </button>
      ))}
    </div>
    <div className="flex items-center justify-end pr-[19px]">
      <button aria-label="显示隐藏的图标">
        <Svg size={12} box={12}>
          <path d="m0 9 6-6 6 6" stroke="#fff" strokeWidth="1.3" />
        </Svg>
      </button>
      <button className="ml-4 text-sm leading-4 font-bold">中</button>
      <button aria-label="百度输入法" className="ml-[23px]">
        <Svg>
          <rect width="16" height="16" rx="1.5" fill="url(#du)" />
          <text
            x="8"
            y="12.5"
            textAnchor="middle"
            fontSize="11"
            fontStyle="italic"
            fontWeight="600"
            fill="#fff"
            fontFamily="'Open Sans', sans-serif"
          >
            du
          </text>
        </Svg>
      </button>
      <button aria-label="网络" className="ml-[22px]">
        <Svg>
          <path
            d="M.6 6.2a10.5 10.5 0 0 1 14.8 0M3 8.7a7 7 0 0 1 10 0M5.3 11a3.8 3.8 0 0 1 5.400 0"
            stroke="#fff"
            strokeWidth="1.2"
          />
          <circle cx="8" cy="13" r="1.5" fill="#fff" />
        </Svg>
      </button>
      <button aria-label="音量" className="ml-2">
        <Svg>
          <path d="M3 6h2.5L9 3v10l-3.5-3H3zM11 6q1.5 2 0 4" stroke="#fff" />
          <path d="M12.8 4.5q2.4 3.5 0 7" stroke="#9a8f93" />
        </Svg>
      </button>
      <time className="ml-[15px] text-right text-[11px] leading-4">
        10:41
        <br />
        2021/7/15
      </time>
    </div>
  </div>
);

const App = () => {
  return (
    <div className="relative flex h-screen flex-col overflow-hidden bg-white font-['Noto_Sans','Noto_Sans_CJK_SC',sans-serif] text-black">
      <Gradients />
      <header className="border-b border-[#dcdfe2] bg-[#eff3f6]">
        <TitleBar />
        <Toolbar />
      </header>
      <AddressBar />
      <div className="flex min-h-0 flex-1">
        <Sidebar />
        <FileList />
      </div>
      <StatusBar />
      <Taskbar />
      <ViewMenu />
      <ShowMenu />
      <PointerArrow />
      <Watermark />
    </div>
  );
};

export default App;
